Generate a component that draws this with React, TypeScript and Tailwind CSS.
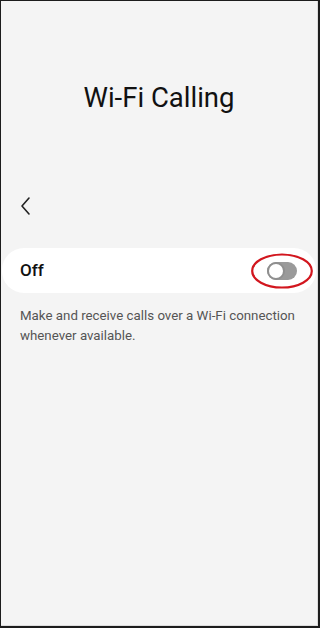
import React from "react";

export default function App() {
  return (
    <div className="w-[320px] h-[628px] bg-[#1c1c1c] pt-px pl-px pr-[2px] pb-[2px]" style={{ fontFamily: "Roboto, 'Noto Sans', sans-serif" }}>
      <div className="w-full h-full bg-[#f4f4f4] border-r border-b border-[#dcdcdc] flex flex-col">
        <div className="h-[181px] flex flex-col items-center pt-[80px]">
          <h1 className="text-[27.5px] leading-[34px] text-[#111]">Wi-Fi Calling</h1>
        </div>
        <div className="pl-[18px] h-[48px] flex items-center">
          <svg width="14" height="20" viewBox="0 0 14 20" fill="none">
            <path d="M10 2 L3 10 L10 18" stroke="#222" strokeWidth="1.6" strokeLinecap="round" strokeLinejoin="round" />
          </svg>
        </div>
        <div className="h-[18px]" />
        <div className="mx-[1px] h-[45px] bg-white rounded-[22px] flex items-center justify-between pl-[18px] pr-[3px]">
          <span className="text-[17px] font-medium text-[#111]">Off</span>
          <div className="relative w-[62px] h-[36px] flex items-center justify-center">
            <div className="w-[30px] h-[18px] rounded-full bg-[#9a9a9a] relative">
              <div className="absolute left-0 top-0 w-[18px] h-[18px] rounded-full bg-white border-2 border-[#8f8f8f]" />
            </div>
            <svg className="absolute inset-0" width="62" height="36" viewBox="0 0 62 36">
              <ellipse cx="31" cy="18" rx="29.8" ry="16.5" fill="none" stroke="#d2161e" strokeWidth="2.2" />
            </svg>
          </div>
        </div>
        <p className="px-[19px] mt-[13px] text-[13.3px] leading-[20px] text-[#555]">
          Make and receive calls over a Wi-Fi connection whenever available.
        </p>
      </div>
    </div>
  );
}
